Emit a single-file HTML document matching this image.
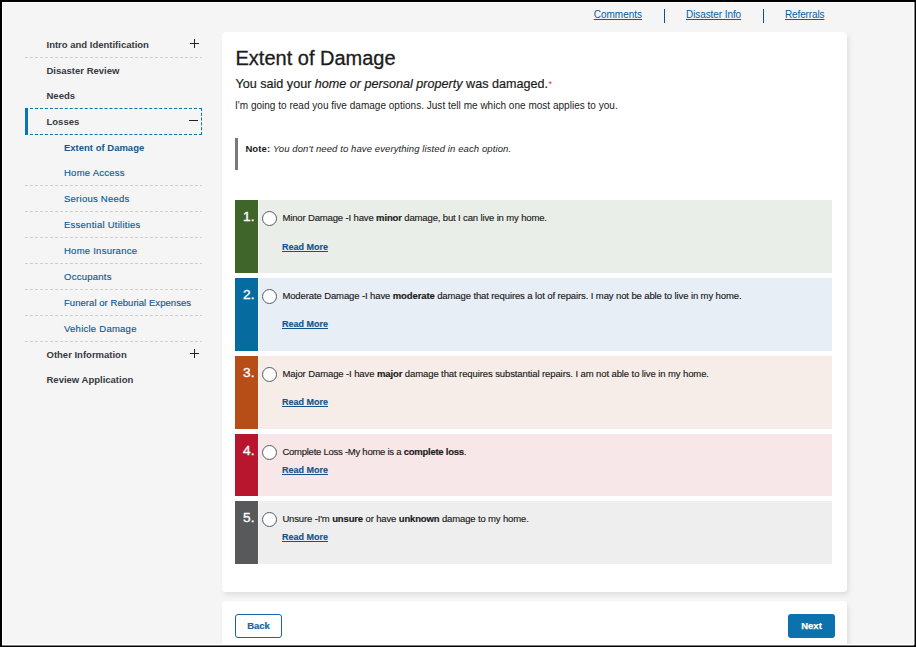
<!DOCTYPE html>
<html><head><meta charset="utf-8"><title>Extent of Damage</title>
<style>
html,body{margin:0;padding:0;width:916px;height:647px;overflow:hidden;background:#000;}
#frame{position:absolute;left:2px;top:2px;width:910px;height:641px;border:1px solid #fff;background:#f5f5f5;overflow:hidden;}
#c{position:absolute;left:-3px;top:-3px;width:916px;height:647px;}
.t{position:absolute;white-space:nowrap;font-family:"Liberation Sans",sans-serif;}
.r{position:absolute;}
body>.r{z-index:5;}
</style></head>
<body><div id="frame"><div id="c">
<div class="t " style="left:593.7px;top:7px;font-size:10px;line-height:15px;color:#005ea2;font-weight:normal;font-style:normal;letter-spacing:0px;text-decoration:underline;">Comments</div>
<div class="r" style="left:663.5px;top:9px;width:1.5px;height:14px;background:#0a5196;"></div>
<div class="t " style="left:686px;top:7px;font-size:10px;line-height:15px;color:#005ea2;font-weight:normal;font-style:normal;letter-spacing:-0.08px;text-decoration:underline;">Disaster Info</div>
<div class="r" style="left:762.5px;top:9px;width:1.5px;height:14px;background:#0a5196;"></div>
<div class="t " style="left:785px;top:7px;font-size:10px;line-height:15px;color:#005ea2;font-weight:normal;font-style:normal;letter-spacing:-0.13px;text-decoration:underline;">Referrals</div>
<div class="t " style="left:46.5px;top:37px;font-size:9.5px;line-height:15px;color:#363a40;font-weight:bold;font-style:normal;letter-spacing:0px;">Intro and Identification</div>
<div class="r" style="left:25px;top:57px;width:177px;height:1px;background:repeating-linear-gradient(90deg,#d0d0d0 0 3px,transparent 3px 5px);"></div>
<div class="t " style="left:46.5px;top:63px;font-size:9.5px;line-height:15px;color:#363a40;font-weight:bold;font-style:normal;letter-spacing:0px;">Disaster Review</div>
<div class="t " style="left:46.5px;top:88px;font-size:9.5px;line-height:15px;color:#363a40;font-weight:bold;font-style:normal;letter-spacing:0px;">Needs</div>
<div class="r" style="left:25px;top:108px;width:177px;height:27px;box-sizing:border-box;border:1px dashed #0d72b0;"></div>
<div class="r" style="left:25px;top:108px;width:3px;height:27px;background:#0d72b0;"></div>
<div class="t " style="left:46.5px;top:114px;font-size:9.5px;line-height:15px;color:#363a40;font-weight:bold;font-style:normal;letter-spacing:0px;">Losses</div>
<div class="t " style="left:64px;top:140px;font-size:9.5px;line-height:15px;color:#16578c;font-weight:bold;font-style:normal;letter-spacing:0px;">Extent of Damage</div>
<div class="t " style="left:64px;top:165px;font-size:9.5px;line-height:15px;color:#0b5a98;font-weight:normal;font-style:normal;letter-spacing:0.25px;-webkit-text-stroke:0.15px #0b5a98;">Home Access</div>
<div class="t " style="left:64px;top:191px;font-size:9.5px;line-height:15px;color:#0b5a98;font-weight:normal;font-style:normal;letter-spacing:0.25px;-webkit-text-stroke:0.15px #0b5a98;">Serious Needs</div>
<div class="t " style="left:64px;top:217px;font-size:9.5px;line-height:15px;color:#0b5a98;font-weight:normal;font-style:normal;letter-spacing:0.25px;-webkit-text-stroke:0.15px #0b5a98;">Essential Utilities</div>
<div class="t " style="left:64px;top:243px;font-size:9.5px;line-height:15px;color:#0b5a98;font-weight:normal;font-style:normal;letter-spacing:0.25px;-webkit-text-stroke:0.15px #0b5a98;">Home Insurance</div>
<div class="t " style="left:64px;top:269px;font-size:9.5px;line-height:15px;color:#0b5a98;font-weight:normal;font-style:normal;letter-spacing:0.25px;-webkit-text-stroke:0.15px #0b5a98;">Occupants</div>
<div class="t " style="left:64px;top:295px;font-size:9.5px;line-height:15px;color:#0b5a98;font-weight:normal;font-style:normal;letter-spacing:0.05px;-webkit-text-stroke:0.15px #0b5a98;">Funeral or Reburial Expenses</div>
<div class="t " style="left:64px;top:321px;font-size:9.5px;line-height:15px;color:#0b5a98;font-weight:normal;font-style:normal;letter-spacing:0.25px;-webkit-text-stroke:0.15px #0b5a98;">Vehicle Damage</div>
<div class="r" style="left:25px;top:185px;width:177px;height:1px;background:repeating-linear-gradient(90deg,#d0d0d0 0 3px,transparent 3px 5px);"></div>
<div class="r" style="left:25px;top:211px;width:177px;height:1px;background:repeating-linear-gradient(90deg,#d0d0d0 0 3px,transparent 3px 5px);"></div>
<div class="r" style="left:25px;top:237px;width:177px;height:1px;background:repeating-linear-gradient(90deg,#d0d0d0 0 3px,transparent 3px 5px);"></div>
<div class="r" style="left:25px;top:263px;width:177px;height:1px;background:repeating-linear-gradient(90deg,#d0d0d0 0 3px,transparent 3px 5px);"></div>
<div class="r" style="left:25px;top:289px;width:177px;height:1px;background:repeating-linear-gradient(90deg,#d0d0d0 0 3px,transparent 3px 5px);"></div>
<div class="r" style="left:25px;top:315px;width:177px;height:1px;background:repeating-linear-gradient(90deg,#d0d0d0 0 3px,transparent 3px 5px);"></div>
<div class="r" style="left:25px;top:341px;width:177px;height:1px;background:repeating-linear-gradient(90deg,#d0d0d0 0 3px,transparent 3px 5px);"></div>
<div class="t " style="left:46.5px;top:347px;font-size:9.5px;line-height:15px;color:#363a40;font-weight:bold;font-style:normal;letter-spacing:0px;">Other Information</div>
<div class="t " style="left:46.5px;top:372px;font-size:9.5px;line-height:15px;color:#363a40;font-weight:bold;font-style:normal;letter-spacing:0px;">Review Application</div>
<div class="r" style="left:190.0px;top:42.75px;width:9.0px;height:1.5px;background:#1f2328;"></div>
<div class="r" style="left:193.75px;top:39.0px;width:1.5px;height:9.0px;background:#1f2328;"></div>
<div class="r" style="left:190.0px;top:352.95px;width:9.0px;height:1.5px;background:#1f2328;"></div>
<div class="r" style="left:193.75px;top:349.2px;width:1.5px;height:9.0px;background:#1f2328;"></div>
<div class="r" style="left:189px;top:119.7px;width:9px;height:1.5px;background:#1f2328;"></div>
<div class="r" style="left:222px;top:32px;width:625px;height:560px;background:#fff;border-radius:4px;box-shadow:2px 3px 5px rgba(0,0,0,0.09);"></div>
<div class="r" style="left:222px;top:601px;width:625px;height:99px;background:#fff;border-radius:4px;box-shadow:2px 3px 5px rgba(0,0,0,0.09);"></div>
<div class="t " style="left:235.5px;top:45px;font-size:20px;line-height:26px;color:#1b1b1b;font-weight:normal;font-style:normal;letter-spacing:0px;-webkit-text-stroke:0.3px #1b1b1b;">Extent of Damage</div>
<div class="t " style="left:235.5px;top:74.7px;font-size:12.6px;line-height:18px;color:#1b1b1b;font-weight:normal;font-style:normal;letter-spacing:0px;-webkit-text-stroke:0.2px #1b1b1b;">You said your <i>home or personal property</i> was damaged.<span style="color:#d83933;font-size:9px;position:relative;top:-1px;margin-left:0.5px;-webkit-text-stroke:0">*</span></div>
<div class="t " style="left:235px;top:98px;font-size:10px;line-height:15px;color:#1b1b1b;font-weight:normal;font-style:normal;letter-spacing:0.02px;">I'm going to read you five damage options. Just tell me which one most applies to you.</div>
<div class="r" style="left:235px;top:138px;width:3px;height:32px;background:#7a7a7a;"></div>
<div class="t " style="left:245.4px;top:141px;font-size:9.5px;line-height:15px;color:#1b1b1b;font-weight:normal;font-style:normal;letter-spacing:0.1px;"><b>Note:</b> <i>You don't need to have everything listed in each option.</i></div>
<div class="r" style="left:235px;top:200px;width:23px;height:73px;background:#40652a;"></div>
<div class="r" style="left:258px;top:200px;width:574px;height:73px;background:#eaeee9;box-sizing:border-box;border-left:1px solid rgba(255,255,255,0.55);"></div>
<div class="t " style="left:235px;top:207px;font-size:13.7px;line-height:19px;color:#fff;font-weight:normal;font-style:normal;letter-spacing:0px;width:19.5px;text-align:right;-webkit-text-stroke:0.35px #fff;">1.</div>
<div class="r" style="left:262px;top:210.5px;width:15px;height:15.0px;box-sizing:border-box;border:1.6px solid #565b61;border-radius:50%;background:#fff;"></div>
<div class="t " style="left:282.4px;top:210px;font-size:9.5px;line-height:15px;color:#1b1b1b;font-weight:normal;font-style:normal;letter-spacing:-0.14px;-webkit-text-stroke:0.15px #1b1b1b;">Minor Damage -I have <b>minor</b> damage, but I can live in my home.</div>
<div class="t " style="left:282px;top:239.5px;font-size:9px;line-height:14px;color:#15538c;font-weight:bold;font-style:normal;letter-spacing:0px;text-decoration:underline;-webkit-text-stroke:0.15px #15538c;">Read More</div>
<div class="r" style="left:235px;top:278px;width:23px;height:73px;background:#066b9f;"></div>
<div class="r" style="left:258px;top:278px;width:574px;height:73px;background:#e7eef6;box-sizing:border-box;border-left:1px solid rgba(255,255,255,0.55);"></div>
<div class="t " style="left:235px;top:285px;font-size:13.7px;line-height:19px;color:#fff;font-weight:normal;font-style:normal;letter-spacing:0px;width:19.5px;text-align:right;-webkit-text-stroke:0.35px #fff;">2.</div>
<div class="r" style="left:262px;top:288.5px;width:15px;height:15.0px;box-sizing:border-box;border:1.6px solid #565b61;border-radius:50%;background:#fff;"></div>
<div class="t " style="left:282.4px;top:288px;font-size:9.5px;line-height:15px;color:#1b1b1b;font-weight:normal;font-style:normal;letter-spacing:-0.11px;-webkit-text-stroke:0.15px #1b1b1b;">Moderate Damage -I have <b>moderate</b> damage that requires a lot of repairs. I may not be able to live in my home.</div>
<div class="t " style="left:282px;top:317px;font-size:9px;line-height:14px;color:#15538c;font-weight:bold;font-style:normal;letter-spacing:0px;text-decoration:underline;-webkit-text-stroke:0.15px #15538c;">Read More</div>
<div class="r" style="left:235px;top:356px;width:23px;height:73px;background:#b74e17;"></div>
<div class="r" style="left:258px;top:356px;width:574px;height:73px;background:#f6ede8;box-sizing:border-box;border-left:1px solid rgba(255,255,255,0.55);"></div>
<div class="t " style="left:235px;top:363px;font-size:13.7px;line-height:19px;color:#fff;font-weight:normal;font-style:normal;letter-spacing:0px;width:19.5px;text-align:right;-webkit-text-stroke:0.35px #fff;">3.</div>
<div class="r" style="left:262px;top:366.5px;width:15px;height:15.0px;box-sizing:border-box;border:1.6px solid #565b61;border-radius:50%;background:#fff;"></div>
<div class="t " style="left:282.4px;top:366px;font-size:9.5px;line-height:15px;color:#1b1b1b;font-weight:normal;font-style:normal;letter-spacing:-0.1px;-webkit-text-stroke:0.15px #1b1b1b;">Major Damage -I have <b>major</b> damage that requires substantial repairs. I am not able to live in my home.</div>
<div class="t " style="left:282px;top:395px;font-size:9px;line-height:14px;color:#15538c;font-weight:bold;font-style:normal;letter-spacing:0px;text-decoration:underline;-webkit-text-stroke:0.15px #15538c;">Read More</div>
<div class="r" style="left:235px;top:434px;width:23px;height:62px;background:#b8162e;"></div>
<div class="r" style="left:258px;top:434px;width:574px;height:62px;background:#f8e7e8;box-sizing:border-box;border-left:1px solid rgba(255,255,255,0.55);"></div>
<div class="t " style="left:235px;top:441px;font-size:13.7px;line-height:19px;color:#fff;font-weight:normal;font-style:normal;letter-spacing:0px;width:19.5px;text-align:right;-webkit-text-stroke:0.35px #fff;">4.</div>
<div class="r" style="left:262px;top:444.5px;width:15px;height:15.0px;box-sizing:border-box;border:1.6px solid #565b61;border-radius:50%;background:#fff;"></div>
<div class="t " style="left:282.4px;top:444px;font-size:9.5px;line-height:15px;color:#1b1b1b;font-weight:normal;font-style:normal;letter-spacing:-0.25px;-webkit-text-stroke:0.15px #1b1b1b;">Complete Loss -My home is a <b>complete loss</b>.</div>
<div class="t " style="left:282px;top:462.6px;font-size:9px;line-height:14px;color:#15538c;font-weight:bold;font-style:normal;letter-spacing:0px;text-decoration:underline;-webkit-text-stroke:0.15px #15538c;">Read More</div>
<div class="r" style="left:235px;top:501px;width:23px;height:63px;background:#58595b;"></div>
<div class="r" style="left:258px;top:501px;width:574px;height:63px;background:#eeeeee;box-sizing:border-box;border-left:1px solid rgba(255,255,255,0.55);"></div>
<div class="t " style="left:235px;top:508px;font-size:13.7px;line-height:19px;color:#fff;font-weight:normal;font-style:normal;letter-spacing:0px;width:19.5px;text-align:right;-webkit-text-stroke:0.35px #fff;">5.</div>
<div class="r" style="left:262px;top:511.5px;width:15px;height:15.0px;box-sizing:border-box;border:1.6px solid #565b61;border-radius:50%;background:#fff;"></div>
<div class="t " style="left:282.4px;top:511px;font-size:9.5px;line-height:15px;color:#1b1b1b;font-weight:normal;font-style:normal;letter-spacing:-0.14px;-webkit-text-stroke:0.15px #1b1b1b;">Unsure -I'm <b>unsure</b> or have <b>unknown</b> damage to my home.</div>
<div class="t " style="left:282px;top:529.6px;font-size:9px;line-height:14px;color:#15538c;font-weight:bold;font-style:normal;letter-spacing:0px;text-decoration:underline;-webkit-text-stroke:0.15px #15538c;">Read More</div>
<div class="r" style="left:235px;top:614px;width:47px;height:24px;box-sizing:border-box;border:1.5px solid #1b64a6;border-radius:3px;background:#fff;"></div>
<div class="t " style="left:235px;top:618px;font-size:9.5px;line-height:15px;color:#1b64a6;font-weight:bold;font-style:normal;letter-spacing:0px;width:47px;text-align:center;-webkit-text-stroke:0.2px #1b64a6;">Back</div>
<div class="r" style="left:788px;top:614px;width:47px;height:24px;background:#0b72ad;border-radius:3px;"></div>
<div class="t " style="left:788px;top:618px;font-size:9.5px;line-height:15px;color:#fff;font-weight:bold;font-style:normal;letter-spacing:0px;width:47px;text-align:center;-webkit-text-stroke:0.25px #fff;">Next</div>
</div></div><div class="r" style="left:914px;top:2px;width:1px;height:643px;background:#808080;"></div>
<div class="r" style="left:2px;top:645px;width:912px;height:1px;background:#808080;"></div>
</body></html>
